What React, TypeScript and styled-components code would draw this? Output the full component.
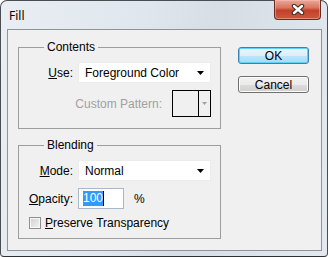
import React from "react";
import styled, { createGlobalStyle } from "styled-components";

const GlobalStyle = createGlobalStyle`
  html, body {
    margin: 0;
    padding: 0;
    background: #ffffff;
  }
  body {
    font-family: "Liberation Sans", Arial, sans-serif;
    font-size: 12px;
    color: #000;
  }
`;

const App: React.FC = () => {
  return (
    <>
      <GlobalStyle />
      <Window>
        <TitleBar>
          <Title>Fill</Title>
          <CloseButton aria-label="Close">
            <svg width="14" height="11" viewBox="0 0 14 11">
              <path
                d="M3 2 L11 9 M11 2 L3 9"
                stroke="#3a2a28"
                strokeWidth="4.4"
                strokeLinecap="round"
              />
              <path
                d="M3 2 L11 9 M11 2 L3 9"
                stroke="#ffffff"
                strokeWidth="2.4"
                strokeLinecap="round"
              />
            </svg>
          </CloseButton>
        </TitleBar>

        <Client>
          <LeftColumn>
            <GroupBox $bottom={11}>
              <Legend>Contents</Legend>
              <FormGrid>
                <Label>
                  <u>U</u>se:
                </Label>
                <Select>
                  <span>Foreground Color</span>
                  <Arrow />
                </Select>
                <PatternRow>
                  <DisabledLabel>Custom Pattern:</DisabledLabel>
                  <PatternBox>
                    <PatternSwatch />
                    <PatternArrow>
                      <svg width="5" height="3" viewBox="0 0 5 3">
                        <polygon points="0,0 5,0 2.5,3" fill="#a0a0a0" />
                      </svg>
                    </PatternArrow>
                  </PatternBox>
                </PatternRow>
              </FormGrid>
            </GroupBox>

            <GroupBox $bottom={8}>
              <Legend>Blending</Legend>
              <FormGrid>
                <Label>
                  <u>M</u>ode:
                </Label>
                <Select>
                  <span>Normal</span>
                  <Arrow />
                </Select>
                <Label>
                  <u>O</u>pacity:
                </Label>
                <OpacityField>
                  <TextInput>
                    <Selected>100</Selected>
                    <Caret />
                  </TextInput>
                  <span>%</span>
                </OpacityField>
                <CheckRow>
                  <CheckBox />
                  <span>
                    <u>P</u>reserve Transparency
                  </span>
                </CheckRow>
              </FormGrid>
            </GroupBox>
          </LeftColumn>

          <ButtonColumn>
            <Button $primary>OK</Button>
            <Button>Cancel</Button>
          </ButtonColumn>
        </Client>
      </Window>
    </>
  );
};

const Arrow: React.FC = () => (
  <svg width="7" height="4" viewBox="0 0 7 4">
    <polygon points="0,0 7,0 3.5,4" fill="#000" />
  </svg>
);

/* ================== STYLED COMPONENTS ================== */

const Window = styled.div`
  box-sizing: border-box;
  width: 328px;
  height: 257px;
  display: flex;
  flex-direction: column;
  border: 1px solid #4a4e53;
  border-bottom-color: #2e3134;
  border-radius: 7px 7px 4px 4px;
  padding: 0 5px 5px 6px;
  background: linear-gradient(
    100deg,
    #e9eef4 0%,
    #dfe6ed 40%,
    #d6dde5 60%,
    #e3e9ef 100%
  );
`;

const TitleBar = styled.div`
  height: 28px;
  display: flex;
  align-items: flex-start;
  flex-shrink: 0;
`;

const Title = styled.div`
  padding: 7px 0 0 2px;
  font-family: "Noto Sans", "Liberation Sans", sans-serif;
  font-size: 12px;
  line-height: 16px;
  color: #000;
`;

const CloseButton = styled.div`
  box-sizing: border-box;
  margin: -1px 1px 0 auto;
  width: 47px;
  height: 20px;
  display: flex;
  align-items: center;
  justify-content: center;
  border: 1px solid #6b2a22;
  border-top: none;
  border-radius: 0 0 4px 4px;
  background: linear-gradient(
    180deg,
    #e9a99c 0%,
    #d9765f 40%,
    #c2402a 55%,
    #cc5a3c 100%
  );
  box-shadow: inset 0 0 0 1px rgba(255, 200, 190, 0.45);
`;

const Client = styled.div`
  flex: 1;
  box-sizing: border-box;
  display: flex;
  align-items: flex-start;
  gap: 17px;
  padding: 10px 12px 0 10px;
  border: 1px solid #8e949a;
  background: #f0f0f0;
`;

const LeftColumn = styled.div`
  width: 203px;
  display: flex;
  flex-direction: column;
  gap: 9px;
`;

const GroupBox = styled.fieldset<{ $bottom?: number }>`
  box-sizing: border-box;
  width: 203px;
  margin: 0;
  min-width: 0;
  padding: 8px 9px ${({ $bottom }) => $bottom ?? 9}px 9px;
  border: 1px solid #9d9d9d;
`;

const Legend = styled.legend`
  margin-left: 16px;
  padding: 0 3px;
  line-height: 14px;
  font-size: 12px;
`;

const FormGrid = styled.div`
  display: grid;
  grid-template-columns: 45px 133px;
  column-gap: 5px;
  row-gap: 7px;
  align-items: center;
`;

const Label = styled.div`
  text-align: right;
  white-space: nowrap;
  line-height: 14px;
`;

const DisabledLabel = styled.span`
  color: #a0a0a0;
`;

const Select = styled.div`
  box-sizing: border-box;
  height: 21px;
  display: flex;
  align-items: center;
  justify-content: space-between;
  padding: 0 6px 0 6px;
  background: #ffffff;
  border: 1px solid #ececec;
`;

const PatternRow = styled.div`
  grid-column: 1 / span 2;
  display: flex;
  align-items: center;
  justify-content: flex-end;
  gap: 10px;
`;

const PatternBox = styled.div`
  box-sizing: border-box;
  width: 39px;
  height: 27px;
  display: flex;
  border: 1px solid #000;
  background: #f0f0f0;
`;

const PatternSwatch = styled.div`
  flex: 1;
  border-right: 1px solid #000;
`;

const PatternArrow = styled.div`
  width: 11px;
  display: flex;
  align-items: center;
  justify-content: center;
`;

const OpacityField = styled.div`
  display: flex;
  align-items: center;
  gap: 10px;
`;

const TextInput = styled.div`
  box-sizing: border-box;
  width: 46px;
  height: 21px;
  display: flex;
  align-items: center;
  padding-left: 4px;
  background: #ffffff;
  border: 1px solid #a6b8cb;
`;

const Selected = styled.span`
  background: #3399ff;
  color: #ffffff;
  line-height: 15px;
`;

const Caret = styled.span`
  width: 1px;
  height: 15px;
  background: #000;
`;

const CheckRow = styled.div`
  grid-column: 1 / span 2;
  height: 14px;
  display: flex;
  align-items: center;
  gap: 4px;
  padding-left: 1px;
`;

const CheckBox = styled.div`
  box-sizing: border-box;
  width: 12px;
  height: 12px;
  border: 1px solid #8f8f8f;
  background: linear-gradient(135deg, #cfcfcf 0%, #f4f4f4 100%);
  box-shadow: inset 0 0 0 1px #f7f7f7;
`;

const ButtonColumn = styled.div`
  display: flex;
  flex-direction: column;
  gap: 12px;
  margin-top: 7px;
`;

const Button = styled.div<{ $primary?: boolean }>`
  box-sizing: border-box;
  width: 71px;
  height: 17px;
  display: flex;
  align-items: center;
  justify-content: center;
  font-size: 12px;
  border-radius: 3px;
  border: 1px solid ${({ $primary }) => ($primary ? "#3c7fb1" : "#707070")};
  background: ${({ $primary }) =>
    $primary
      ? "linear-gradient(180deg, #eaf6fd 0%, #d9f0fc 50%, #bee6fd 51%, #a7d9f5 100%)"
      : "linear-gradient(180deg, #f2f2f2 0%, #ebebeb 50%, #dddddd 51%, #cfcfcf 100%)"};
  box-shadow: ${({ $primary }) =>
    $primary ? "inset 0 0 0 1px #5fd2f9" : "inset 0 0 0 1px #fcfcfc"};
`;

export default App;
